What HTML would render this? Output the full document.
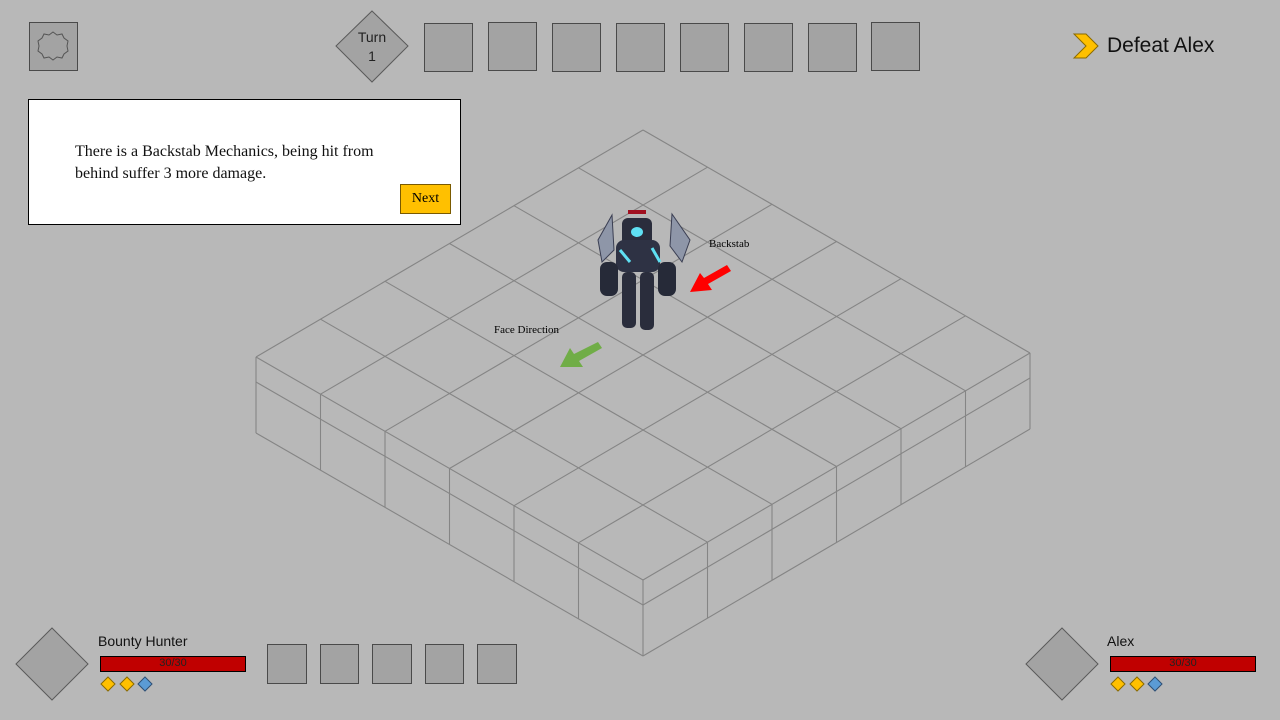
<!DOCTYPE html>
<html><head><meta charset="utf-8"><style>
body{margin:0;width:1280px;height:720px;background:#b8b8b8;position:relative;overflow:hidden;font-family:"Liberation Sans",sans-serif}
.sq{position:absolute;background:#a3a3a3;border:1px solid #4a4a4a;box-sizing:border-box}
.abs{position:absolute}
.ser{font-family:"Liberation Serif",serif}
</style></head><body>
<div class="sq" style="left:29px;top:22px;width:49px;height:49px"></div>
<svg class="abs" style="left:0;top:0" width="1280" height="720">
<g stroke="#858585" stroke-width="1.1" fill="none">
<line x1="643" y1="130" x2="1030" y2="353"/><line x1="578.5" y1="167.8" x2="965.5" y2="390.8"/><line x1="514" y1="205.7" x2="901" y2="428.7"/><line x1="449.5" y1="243.5" x2="836.5" y2="466.5"/><line x1="385" y1="281.3" x2="772" y2="504.3"/><line x1="320.5" y1="319.2" x2="707.5" y2="542.2"/><line x1="256" y1="357" x2="643" y2="580"/>
<line x1="643" y1="130" x2="256" y2="357"/><line x1="707.5" y1="167.2" x2="320.5" y2="394.2"/><line x1="772" y1="204.3" x2="385" y2="431.3"/><line x1="836.5" y1="241.5" x2="449.5" y2="468.5"/><line x1="901" y1="278.7" x2="514" y2="505.7"/><line x1="965.5" y1="315.8" x2="578.5" y2="542.8"/><line x1="1030" y1="353" x2="643" y2="580"/>
<line x1="256" y1="382" x2="643" y2="605"/><line x1="256" y1="433" x2="643" y2="656"/>
<line x1="1030" y1="378" x2="643" y2="605"/><line x1="1030" y1="429" x2="643" y2="656"/>
<line x1="256" y1="357" x2="256" y2="433"/><line x1="320.5" y1="394.2" x2="320.5" y2="470.2"/><line x1="385" y1="431.3" x2="385" y2="507.3"/><line x1="449.5" y1="468.5" x2="449.5" y2="544.5"/><line x1="514" y1="505.7" x2="514" y2="581.7"/><line x1="578.5" y1="542.8" x2="578.5" y2="618.8"/><line x1="643" y1="580" x2="643" y2="656"/>
<line x1="707.5" y1="542.2" x2="707.5" y2="618.2"/><line x1="772" y1="504.3" x2="772" y2="580.3"/><line x1="836.5" y1="466.5" x2="836.5" y2="542.5"/><line x1="901" y1="428.7" x2="901" y2="504.7"/><line x1="965.5" y1="390.8" x2="965.5" y2="466.8"/><line x1="1030" y1="353" x2="1030" y2="429"/>
</g>
<g>
<polygon points="612,215 598,240 602,262 614,250" fill="#8e96a8" stroke="#3a3e52"/>
<polygon points="672,214 690,240 682,262 670,246" fill="#8e96a8" stroke="#3a3e52"/>
<rect x="622" y="218" width="30" height="28" rx="6" fill="#2a2d3c"/>
<rect x="616" y="240" width="44" height="32" rx="8" fill="#2e3244"/>
<ellipse cx="637" cy="232" rx="6" ry="5" fill="#5fe0f2"/>
<path d="M620 250 L630 262 M652 248 L660 262" stroke="#5fe0f2" stroke-width="3"/>
<rect x="600" y="262" width="18" height="34" rx="7" fill="#262a38"/>
<rect x="658" y="262" width="18" height="34" rx="7" fill="#262a38"/>
<rect x="622" y="272" width="14" height="56" rx="5" fill="#2a2d3c"/>
<rect x="640" y="272" width="14" height="58" rx="5" fill="#2a2d3c"/>
<rect x="628" y="210" width="18" height="4" fill="#a01020"/>
</g>
<polygon points="727,265 731,271 708,284 712,290 690,292 700,273 704,278" fill="#ff0000"/>
<polygon points="598,342 602,348 579,361 583,367 560,367 570,348 574,354" fill="#70ad47"/>
<polygon points="372,11 408,46 372,82 336,46" fill="#a3a3a3" stroke="#5a5a5a"/>
<polygon points="52,628 88,664 52,700 16,664" fill="#a3a3a3" stroke="#5a5a5a"/>
<polygon points="1062,628 1098,664 1062,700 1026,664" fill="#a3a3a3" stroke="#5a5a5a"/>
<g stroke="#8a6a00"><polygon points="108,677 115,684 108,691 101,684" fill="#ffc000"/><polygon points="127,677 134,684 127,691 120,684" fill="#ffc000"/></g>
<polygon points="145,677 152,684 145,691 138,684" fill="#5b9bd5" stroke="#2e4f75"/>
<g stroke="#8a6a00"><polygon points="1118,677 1125,684 1118,691 1111,684" fill="#ffc000"/><polygon points="1137,677 1144,684 1137,691 1130,684" fill="#ffc000"/></g>
<polygon points="1155,677 1162,684 1155,691 1148,684" fill="#5b9bd5" stroke="#2e4f75"/>
<polygon points="1074,34 1086,34 1098,46 1086,58 1074,58 1086,46" fill="#ffc000" stroke="#8a6a00"/>
<polygon points="53,32 57,35 62,34 64,38 68,41 67,46 68,51 64,54 62,58 57,57 53,60 49,57 44,58 42,54 38,51 39,46 38,41 42,38 44,34 49,35" fill="none" stroke="#555"/>
</svg>
<div class="abs" style="left:336px;top:28px;width:72px;text-align:center;font-size:14px;line-height:19px;color:#222">Turn<br>1</div>
<div class="sq" style="left:424px;top:23px;width:49px;height:49px"></div>
<div class="sq" style="left:488px;top:22px;width:49px;height:49px"></div>
<div class="sq" style="left:552px;top:23px;width:49px;height:49px"></div>
<div class="sq" style="left:616px;top:23px;width:49px;height:49px"></div>
<div class="sq" style="left:680px;top:23px;width:49px;height:49px"></div>
<div class="sq" style="left:744px;top:23px;width:49px;height:49px"></div>
<div class="sq" style="left:808px;top:23px;width:49px;height:49px"></div>
<div class="sq" style="left:871px;top:22px;width:49px;height:49px"></div>
<div class="abs" style="left:1107px;top:34px;font-size:21px;color:#111">Defeat Alex</div>
<div class="abs" style="left:28px;top:99px;width:433px;height:126px;background:#fff;border:1px solid #000;box-sizing:border-box"></div>
<div class="abs ser" style="left:75px;top:141px;font-size:16px;line-height:22px;color:#111">There is a Backstab Mechanics, being hit from<br>behind suffer 3 more damage.</div>
<div class="abs ser" style="left:400px;top:184px;width:51px;height:30px;background:#ffc000;border:1px solid #7a5a00;box-sizing:border-box;text-align:center;line-height:28px;font-size:14px">Next</div>
<div class="abs ser" style="left:709px;top:238px;font-size:11px">Backstab</div>
<div class="abs ser" style="left:494px;top:324px;font-size:11px">Face Direction</div>
<div class="abs" style="left:98px;top:633px;font-size:14px;color:#111">Bounty Hunter</div>
<div class="abs" style="left:100px;top:656px;width:146px;height:16px;background:#c00000;border:1px solid #000;box-sizing:border-box;text-align:center;font-size:11px;line-height:13px;color:#222">30/30</div>
<div class="sq" style="left:267px;top:644px;width:40px;height:40px"></div>
<div class="sq" style="left:320px;top:644px;width:39px;height:40px"></div>
<div class="sq" style="left:372px;top:644px;width:40px;height:40px"></div>
<div class="sq" style="left:425px;top:644px;width:39px;height:40px"></div>
<div class="sq" style="left:477px;top:644px;width:40px;height:40px"></div>
<div class="abs" style="left:1107px;top:633px;font-size:14px;color:#111">Alex</div>
<div class="abs" style="left:1110px;top:656px;width:146px;height:16px;background:#c00000;border:1px solid #000;box-sizing:border-box;text-align:center;font-size:11px;line-height:13px;color:#222">30/30</div>
</body></html>
